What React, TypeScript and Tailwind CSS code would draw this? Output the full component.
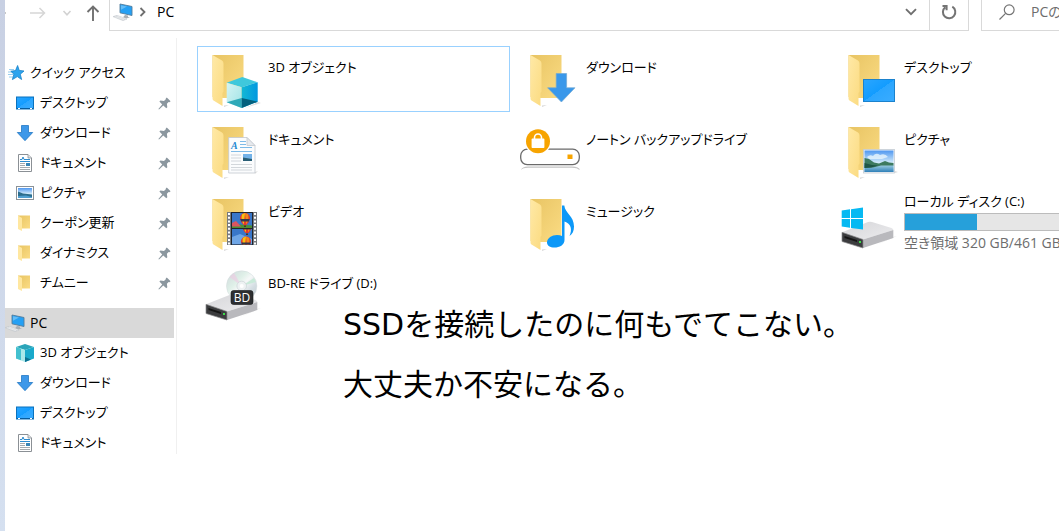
import type { ReactNode } from 'react';

const UI_FONT = "font-['Open_Sans','Noto_Sans_CJK_JP',sans-serif]";

function Defs() {
  return (
    <svg width="0" height="0" className="absolute" aria-hidden="true">
      <defs>
        <linearGradient id="folderBack" x1="0" y1="0" x2="1" y2="1">
          <stop offset="0" stopColor="#e8c463" />
          <stop offset="1" stopColor="#fbdc84" />
        </linearGradient>
        <linearGradient id="folderFront" x1="0" y1="0" x2="1" y2="1">
          <stop offset="0" stopColor="#ffe9a6" />
          <stop offset="1" stopColor="#fbdb81" />
        </linearGradient>
        <linearGradient id="screen" x1="0" y1="0" x2="1" y2="1">
          <stop offset="0" stopColor="#2ba6ff" />
          <stop offset="0.5" stopColor="#129cff" />
          <stop offset="0.5" stopColor="#2ba6ff" />
          <stop offset="1" stopColor="#3aacff" />
        </linearGradient>
        <linearGradient id="cubeLeft" x1="0" y1="0" x2="1" y2="1">
          <stop offset="0" stopColor="#d5f4f4" />
          <stop offset="1" stopColor="#9fe3e6" />
        </linearGradient>
        <linearGradient id="cubeRight" x1="0" y1="0" x2="1" y2="0">
          <stop offset="0" stopColor="#14b8d4" />
          <stop offset="1" stopColor="#0098e0" />
        </linearGradient>
        <linearGradient id="sky" x1="0" y1="0" x2="0" y2="1">
          <stop offset="0" stopColor="#4f97f0" />
          <stop offset="0.6" stopColor="#d9effb" />
          <stop offset="1" stopColor="#8fc4e4" />
        </linearGradient>
        <linearGradient id="sea" x1="0" y1="0" x2="0" y2="1">
          <stop offset="0" stopColor="#9fcfe2" />
          <stop offset="1" stopColor="#2f7fb8" />
        </linearGradient>
        <linearGradient id="driveTop" x1="0" y1="0" x2="1" y2="1">
          <stop offset="0" stopColor="#d6d6d9" />
          <stop offset="1" stopColor="#ececee" />
        </linearGradient>
        <linearGradient id="disc" x1="0" y1="0" x2="1" y2="1">
          <stop offset="0" stopColor="#cfd8db" />
          <stop offset="0.35" stopColor="#dff0e8" />
          <stop offset="0.5" stopColor="#f6f8f8" />
          <stop offset="0.7" stopColor="#d5dee3" />
          <stop offset="1" stopColor="#bcc8ce" />
        </linearGradient>
      </defs>
    </svg>
  );
}

function TileIcon({ children }: { children: ReactNode }) {
  return (
    <svg viewBox="0 0 64 64" className="size-16 shrink-0" aria-hidden="true">
      {children}
    </svg>
  );
}

function Folder() {
  return (
    <>
      <path d="M24 58.5 29 58 24 60Z" fill="#d8d8d8" />
      <path d="M12.5 8H43.5V51H23L12.5 50Z" fill="url(#folderBack)" />
      <path d="M12.5 8 22 13.5Q23.5 14.5 23.5 16.5V44.5L22.5 46V59L13.5 53.5Q12.5 53 12.5 51.5Z" fill="url(#folderFront)" />
    </>
  );
}

function CubeFolder() {
  return (
    <TileIcon>
      <Folder />
      <path d="M58 55 61 56 45 61Z" fill="#dedede" />
      <path d="M42.3 30 57.7 35.3 41.7 40.3 26.7 35.7Z" fill="#3fc8dc" />
      <path d="M26.7 35.7 41.7 40.3V61L26.7 55.3Z" fill="url(#cubeLeft)" />
      <path d="M57.7 35.3 41.7 40.3V61L57.7 54.7Z" fill="url(#cubeRight)" />
      <path d="M41.7 51V61L26.7 55.3Z" fill="#2fa9b8" />
      <path d="M41.7 51 57.7 54.7 41.7 61Z" fill="#04607c" />
    </TileIcon>
  );
}

function DownloadFolder() {
  return (
    <TileIcon>
      <Folder />
      <path d="M38.2 26.5H48.6V40.8H57L43.4 55 29.6 40.8H38.2Z" fill="#3a98ea" stroke="#72a9d3" strokeWidth="0.7" />
    </TileIcon>
  );
}

function DesktopFolder() {
  return (
    <TileIcon>
      <Folder />
      <rect x="27.5" y="32.5" width="31" height="22" fill="url(#screen)" stroke="#1b82cd" />
    </TileIcon>
  );
}

function DocumentFolder() {
  return (
    <TileIcon>
      <Folder />
      <path d="M55 53 58 52 55 55Z" fill="#ddd" />
      <path d="M28.7 18.5H47L55 26.5V54H28.7Z" fill="#fbfcfd" stroke="#c3c8ce" strokeWidth="0.8" />
      <path d="M47 18.5V26.5H55Z" fill="#e6e9ed" stroke="#c3c8ce" strokeWidth="0.8" />
      <text x="31" y="30" fontSize="10" fontWeight="700" fontStyle="italic" fontFamily="Liberation Serif, serif" fill="#1e88d2">A</text>
      <path d="M40 22.5H46M40 25.5H46M40 28.5H52M31 32.5H52" stroke="#6eb2e4" strokeWidth="0.9" />
      <path d="M31 36H41M31 39H41M31 42H41M31 45.5H52M31 48.5H52M31 51H52" stroke="#c9cdd2" strokeWidth="0.8" />
      <rect x="43" y="35" width="9" height="7" fill="#72b2e8" />
      <path d="M43 38.5 52 40V42H43Z" fill="#285d75" />
    </TileIcon>
  );
}

function PictureFolder() {
  return (
    <TileIcon>
      <Folder />
      <path d="M59 52 62 53 59 54Z" fill="#ddd" />
      <rect x="27.5" y="30.5" width="31" height="23.5" fill="#f4f6f8" stroke="#c2cbd3" strokeWidth="0.8" />
      <rect x="28.5" y="31.5" width="29" height="21.5" fill="url(#sky)" />
      <path d="M31 38Q34 35 37 37 40 33 44 36 49 34 52 38L46 40H33Z" fill="#e9f5fd" opacity="0.8" />
      <rect x="28.5" y="46" width="29" height="7" fill="url(#sea)" />
      <path d="M28.5 39 33 40 38 43.5 43 44.5 49 42 53 43.5 57.5 44V46.5H45L37 48.5 28.5 49Z" fill="#3d7a60" />
      <path d="M28.5 44 36 46 42 46.5 35 48.5 28.5 49Z" fill="#1f5646" />
    </TileIcon>
  );
}

function NortonDrive() {
  return (
    <TileIcon>
      <path d="M3 51Q4 47.5 10 47.5H54Q61 47.5 62 51 59 48.8 54 48.8H10Q5 48.8 3 51Z" fill="#c4c4c4" />
      <rect x="2.7" y="30.2" width="58.6" height="15.4" rx="6.5" fill="#fff" stroke="#6a6a6a" strokeWidth="1.3" />
      <circle cx="20" cy="22.3" r="13.2" fill="#fff" />
      <circle cx="20" cy="22.3" r="12" fill="#f7a400" />
      <rect x="13.6" y="19.6" width="12.8" height="9.4" rx="0.8" fill="#fff" />
      <path d="M16.5 20V18.5a3.5 3.5 0 0 1 7 0V20" fill="none" stroke="#fff" strokeWidth="1.6" />
      <rect x="49.5" y="35.5" width="5" height="4.5" fill="#f7a400" />
    </TileIcon>
  );
}

function Balloon({ x, y }: { x: number; y: number }) {
  return (
    <g transform={`translate(${x} ${y})`}>
      <path d="M-5 0A5 5 0 0 1 5 0Q4.5 4 1.5 7H-1.5Q-4.5 4-5 0Z" fill="#e5352d" />
      <path d="M-3-3.8Q-4.5 1-1.2 6.5L0-5Z" fill="#f5c211" />
      <path d="M3-3.8Q4.5 1 1.2 6.5L0-5Z" fill="#f08a1c" />
      <path d="M-4.8 1H4.8L3.8 3.5H-3.8Z" fill="#31384e" />
      <path d="M-1 7.5H1V9H-1Z" fill="#503020" />
    </g>
  );
}

function VideoFolder() {
  return (
    <TileIcon>
      <Folder />
      <rect x="27" y="21" width="30" height="33" fill="#777b80" />
      <rect x="31" y="21" width="22" height="33" fill="#20242b" />
      <rect x="32" y="22" width="20" height="15" fill="#3977c9" />
      <path d="M32 35 40 33.5 52 34.5V37H32Z" fill="#4c8e35" />
      <path d="M32 32 36 30 41 35.5H32Z" fill="#db5560" />
      <Balloon x={45} y={27} />
      <svg x="32" y="38" width="20" height="15.5" viewBox="0 0 20 15.5">
        <rect width="20" height="15.5" fill="#3977c9" />
        <path d="M0 8 8 5 20 10V15.5H0Z" fill="#6fa6e6" />
        <Balloon x={15} y={-3} />
        <Balloon x={14} y={12.5} />
      </svg>
      <path d="M29 22V54M55 22V54" stroke="#fff" strokeWidth="2" strokeDasharray="2 1.7" />
    </TileIcon>
  );
}

function MusicFolder() {
  return (
    <TileIcon>
      <Folder />
      <path d="M44 14.5H46.3C47 22 56 25 56 35.5 56 40 54.5 43 51.5 45 54.5 38 53 33 46.5 30.5V49C46.5 54 41.5 56.5 36.5 56.5 32 56.5 29 54.5 29 51.5 29 47 34 44 39 44Q42 44 44 45Z" fill="#0c98f8" />
    </TileIcon>
  );
}

function DriveBody() {
  return (
    <>
      <path d="M57 46 61 45 40 54Z" fill="#e4e4e4" />
      <path d="M6 41.3 32 31Q34 30.3 36 31L55.5 37Q57.5 38 57.3 39L27 48.5Z" fill="url(#driveTop)" />
      <path d="M27 48.5 57.3 39V47L27 57Z" fill="#b9b9bd" />
      <path d="M6 41.3 27 48.5V57L6 50.5Z" fill="#3b3c3e" stroke="#8b8b8d" strokeWidth="0.7" />
      <path d="M8.5 45 21 49V51L8.5 47Z" fill="#151515" />
      <rect x="23" y="50" width="2" height="2" fill="#3bdc48" />
    </>
  );
}

function LocalDisk() {
  return (
    <TileIcon>
      <DriveBody />
      <path d="M5.7 19.5 14 18.3V27H5.7ZM15 18.2 27 16.5V27H15ZM5.7 28H14V36.8L5.7 35.6ZM15 28H27V38.5L15 37Z" fill="#06b9f2" />
    </TileIcon>
  );
}

function BdDrive() {
  return (
    <TileIcon>
      <DriveBody />
      <circle cx="41.7" cy="23" r="15.2" fill="url(#disc)" stroke="#d2dadd" strokeWidth="0.5" />
      <path d="M41.7 23 29.5 14 34 10Z" fill="#eec9e3" opacity="0.6" />
      <path d="M41.7 23 54 15 56 19Z" fill="#c9ead9" />
      <circle cx="41.7" cy="23" r="4.8" fill="#eef2f3" stroke="#c5ced2" strokeWidth="0.6" />
      <circle cx="41.7" cy="23" r="2" fill="#fff" />
      <rect x="31" y="27.5" width="22" height="14" rx="2.5" fill="#2d2f31" stroke="#16181a" strokeWidth="0.6" />
      <text x="42" y="39" textAnchor="middle" fontSize="12" fontFamily="Open Sans, sans-serif" fill="#fff">BD</text>
    </TileIcon>
  );
}

function SmallIcon({ children }: { children: ReactNode }) {
  return (
    <svg viewBox="0 0 18 18" className="size-[18px] shrink-0" aria-hidden="true">
      {children}
    </svg>
  );
}

const smallIcons: Record<string, ReactNode> = {
  star: (
    <SmallIcon>
      <path d="M1 5.5H6M0 8H5M0 10.5H5M1 13H5" stroke="#7cc0ea" strokeWidth="0.8" />
      <path d="M9.6 1.5 11.2 6.4 16 7 12.3 10.2 13.6 15.5 9.3 12.6 4.4 15.6 5.9 10.2 2.8 7.2 7.5 6.6Z" fill="#2da4ee" stroke="#1681c9" strokeWidth="0.8" />
    </SmallIcon>
  ),
  desktop: (
    <SmallIcon>
      <rect x="0.5" y="3" width="17" height="12" fill="url(#screen)" stroke="#0b72bd" />
      <path d="M1 14.5H17" stroke="#075b9c" />
      <path d="M2 14.5H4M14 14.5H16" stroke="#fff" />
    </SmallIcon>
  ),
  download: (
    <SmallIcon>
      <path d="M5.5 1.5H12.5V8.5H16.7L9 16.7 1.3 8.5H5.5Z" fill="#3d98e9" stroke="#2277c4" strokeWidth="0.8" />
    </SmallIcon>
  ),
  document: (
    <SmallIcon>
      <path d="M2.5 .5H12L15.5 4V17.5H2.5Z" fill="#fff" stroke="#8b9095" />
      <path d="M12 .5V4H15.5" fill="#dfe3e6" stroke="#8b9095" strokeWidth="0.8" />
      <path d="M4 5.5H6L7 3 8 5.5H14M4 7.5H14" fill="none" stroke="#2d8bce" />
      <path d="M4 9.5H9M4 11.5H9M4 13.5H14M4 15.5H14" stroke="#a5aaae" />
      <path d="M10 9H14V12H10Z" fill="#3a85b5" />
    </SmallIcon>
  ),
  picture: (
    <SmallIcon>
      <rect x="0.5" y="2.5" width="17" height="13" fill="#fff" stroke="#8a9298" />
      <rect x="2" y="4" width="14" height="10" fill="url(#sky)" />
      <path d="M2 7.5 7 9.5 16 10.5V14H2Z" fill="#2c6d8c" />
      <path d="M2 12 10 11.5 16 13V14H2Z" fill="#4f9fd0" />
    </SmallIcon>
  ),
  folder: (
    <SmallIcon>
      <path d="M2 1.5H14V14.5H2Z" fill="url(#folderBack)" />
      <path d="M2 1.5 6 4V17L2 15Z" fill="#ffe7a0" />
    </SmallIcon>
  ),
  cube: (
    <SmallIcon>
      <path d="M9 0 18 3 9 6 0 3Z" fill="#2ba5b9" />
      <path d="M0 3 9 6V18L0 14.5Z" fill="#a9e8ea" />
      <path d="M0 3 5 4.7V16.3L0 14.5Z" fill="#43c0cf" />
      <path d="M18 3 9 6V18L18 14.5Z" fill="#19a9cb" />
      <path d="M9 13 15 15.5 9 18Z" fill="#0b7191" />
    </SmallIcon>
  ),
};

function Computer() {
  return (
    <svg viewBox="0 0 20 18" className="h-[18px] w-5 shrink-0" aria-hidden="true">
      <path d="M7 1 19 3.5V12.5L7 9.8Z" fill="#25a0f4" stroke="#547d9c" strokeWidth="0.9" />
      <path d="M8 2.2 14 3.5 8 6.8Z" fill="#65bdf6" />
      <path d="M12 12 15 12.6V14L17 14.6 13 15.6 10 14.3Z" fill="#a9afb4" />
      <path d="M0 13.6 4 12.4 14 16 10 17.6Z" fill="#d5d9dc" stroke="#c3c8cc" strokeWidth="0.6" />
      <path d="M2 13.7 11 16.6M4 13 13 16" stroke="#f6f7f8" strokeWidth="0.5" />
    </svg>
  );
}

function Pin() {
  return (
    <svg viewBox="0 0 13 13" className="size-[13px] shrink-0" aria-hidden="true">
      <path d="M8.8.5 12.6 4.2 11.4 5.2 10.6 4.9 8.9 6.8 9.3 10.2 8.3 11.2 5.3 8.4 1 12.6.4 12 4.2 7.4 1.4 4.6 2.4 3.6 6 3.9 8 2.1 7.7 1.4Z" fill="#8b979f" />
    </svg>
  );
}

type Entry = { label: string; icon: string };

const pinned: Entry[] = [
  { label: 'デスクトップ', icon: 'desktop' },
  { label: 'ダウンロード', icon: 'download' },
  { label: 'ドキュメント', icon: 'document' },
  { label: 'ピクチャ', icon: 'picture' },
  { label: 'クーポン更新', icon: 'folder' },
  { label: 'ダイナミクス', icon: 'folder' },
  { label: 'チムニー', icon: 'folder' },
];

const computer: Entry[] = [
  { label: '3D オブジェクト', icon: 'cube' },
  { label: 'ダウンロード', icon: 'download' },
  { label: 'デスクトップ', icon: 'desktop' },
  { label: 'ドキュメント', icon: 'document' },
];

function SidebarItem({ entry, pin = false }: { entry: Entry; pin?: boolean }) {
  return (
    <li>
      <button className="flex h-[30px] w-full items-center gap-1.5 pr-[3px] pl-[11px] text-left">
        {smallIcons[entry.icon]}
        <span className="grow">{entry.label}</span>
        {pin && <Pin />}
      </button>
    </li>
  );
}

function Sidebar() {
  return (
    <nav className="w-[172px] shrink-0 border-r border-[#f0f0f0] pt-5 pr-0.5 text-[13px]">
      <button className="flex h-[30px] w-full items-center gap-1 pl-[3px] text-left">
        {smallIcons.star}
        クイック アクセス
      </button>
      <ul>
        {pinned.map((entry) => (
          <SidebarItem key={entry.label} entry={entry} pin />
        ))}
      </ul>
      <button className="mt-2.5 flex h-[30px] w-full items-center gap-[5px] bg-[#d9d9d9] text-left text-sm">
        <Computer />
        PC
      </button>
      <ul className="-mb-1">
        {computer.map((entry) => (
          <SidebarItem key={entry.label} entry={entry} />
        ))}
      </ul>
    </nav>
  );
}

function TopBar() {
  return (
    <header className="flex h-[31px] text-sm">
      <div className="flex w-[104px] shrink-0 items-center pb-1.5">
        <button aria-label="戻る">
          <svg width="10" height="12" viewBox="0 0 10 12">
            <path d="M0 5.2H1V6.8H0Z" fill="#b5b5b5" />
          </svg>
        </button>
        <button aria-label="進む" className="ml-[15px]">
          <svg width="16" height="12" viewBox="0 0 16 12" fill="none" stroke="#d6d6d6" strokeWidth="1.5">
            <path d="M0 6H14.5M9.5 1 14.5 6 9.5 11" />
          </svg>
        </button>
        <button aria-label="最近表示した場所" className="ml-4">
          <svg width="10" height="8" viewBox="0 0 10 8" fill="none" stroke="#d2d2d2" strokeWidth="1.6">
            <path d="M1.5 2 5 5.8 8.5 2" />
          </svg>
        </button>
        <button aria-label="上へ" className="ml-3.5">
          <svg width="14" height="16" viewBox="0 0 14 16" fill="none" stroke="#707070" strokeWidth="1.9">
            <path d="M7 16V1.5M1.5 7 7 1.5 12.5 7" />
          </svg>
        </button>
      </div>
      <div className="flex min-w-0 grow border-x border-b border-[#d9d9d9]">
        <button className="flex grow items-center pb-1.5 pl-[3px] text-left">
          <Computer />
          <svg width="8" height="10" viewBox="0 0 8 10" fill="none" stroke="#6f6f6f" strokeWidth="1.8" className="mr-2.5 ml-1.5">
            <path d="M1.5 1 5.5 5 1.5 9" />
          </svg>
          PC
        </button>
        <button aria-label="以前の場所" className="px-3 pb-1.5">
          <svg width="12" height="8" viewBox="0 0 12 8" fill="none" stroke="#6f6f6f" strokeWidth="1.9">
            <path d="M1 1.2 6 6.2 11 1.2" />
          </svg>
        </button>
        <button aria-label="最新の情報に更新" className="flex w-[39px] shrink-0 items-center justify-center border-l border-[#d9d9d9] pb-1.5">
          <svg width="16" height="16" viewBox="0 0 16 16" fill="none" stroke="#747474" strokeWidth="2">
            <path d="M11.3 2.7A6.2 6.2 0 1 1 4.2 3.2M1.5 2H5.6V6.2" />
          </svg>
        </button>
      </div>
      <label className="ml-3 flex w-[78px] shrink-0 items-center gap-4 border-b border-l border-[#d9d9d9] pb-1.5 pl-[17px]">
        <svg width="16" height="16" viewBox="0 0 16 16" fill="none" stroke="#757575" strokeWidth="1.2" className="shrink-0">
          <circle cx="10.2" cy="5.8" r="4.9" />
          <path d="M6.6 9.4.5 15.5" />
        </svg>
        <input
          type="text"
          aria-label="PCの検索"
          placeholder="PCの検索"
          className="w-20 shrink-0 outline-none placeholder:text-[#6d6d6d]"
        />
      </label>
    </header>
  );
}

type TileProps = { icon: ReactNode; label: string; selected?: boolean };

function Tile({ icon, label, selected = false }: TileProps) {
  return (
    <button
      className={`flex h-[66px] items-start gap-1 border pl-0.5 text-left ${
        selected ? 'border-[#99d1ff]' : 'border-transparent'
      }`}
    >
      {icon}
      <span className="pt-2.5 leading-5">{label}</span>
    </button>
  );
}

function DiskTile() {
  return (
    <button className="flex h-[66px] items-start gap-1 border border-transparent pl-0.5 text-left">
      <LocalDisk />
      <span className="grow">
        <span className="block leading-5">ローカル ディスク (C:)</span>
        <span className="mt-0.5 block h-[18px] border border-[#bcbcbc] bg-[#e6e6e6]">
          <span className="block h-full w-[30%] bg-[#26a0da]" />
        </span>
        <span className="mt-0.5 block text-sm leading-5 text-[#6d6d6d]">空き領域 320 GB/461 GB</span>
      </span>
    </button>
  );
}

export default function App() {
  return (
    <div className={`${UI_FONT} flex min-h-screen overflow-hidden bg-white text-black [font-feature-settings:'palt']`}>
      <Defs />
      <div className="w-[5px] shrink-0 bg-linear-to-b from-[#c8d0e3] to-[#d5e0f0]" />
      <div className="min-w-0 grow">
        <TopBar />
        <div className="flex items-start pt-[7px]">
          <Sidebar />
          <main className="relative min-w-0 grow overflow-hidden pt-2 pb-20 pl-5">
            <div className="grid grid-cols-[repeat(3,313px)] gap-x-[5px] gap-y-1.5 text-[13px]">
              <Tile icon={<CubeFolder />} label="3D オブジェクト" selected />
              <Tile icon={<DownloadFolder />} label="ダウンロード" />
              <Tile icon={<DesktopFolder />} label="デスクトップ" />
              <Tile icon={<DocumentFolder />} label="ドキュメント" />
              <Tile icon={<NortonDrive />} label="ノートン バックアップドライブ" />
              <Tile icon={<PictureFolder />} label="ピクチャ" />
              <Tile icon={<VideoFolder />} label="ビデオ" />
              <Tile icon={<MusicFolder />} label="ミュージック" />
              <DiskTile />
              <Tile icon={<BdDrive />} label="BD-RE ドライブ (D:)" />
            </div>
            <div className="absolute top-[257px] left-[166px] font-['DejaVu_Sans','Noto_Sans_CJK_JP',sans-serif] text-[30px] leading-[60px] whitespace-nowrap [font-feature-settings:normal]">
              <p>SSDを接続したのに何もでてこない。</p>
              <p>大丈夫か不安になる。</p>
            </div>
          </main>
        </div>
      </div>
    </div>
  );
}
